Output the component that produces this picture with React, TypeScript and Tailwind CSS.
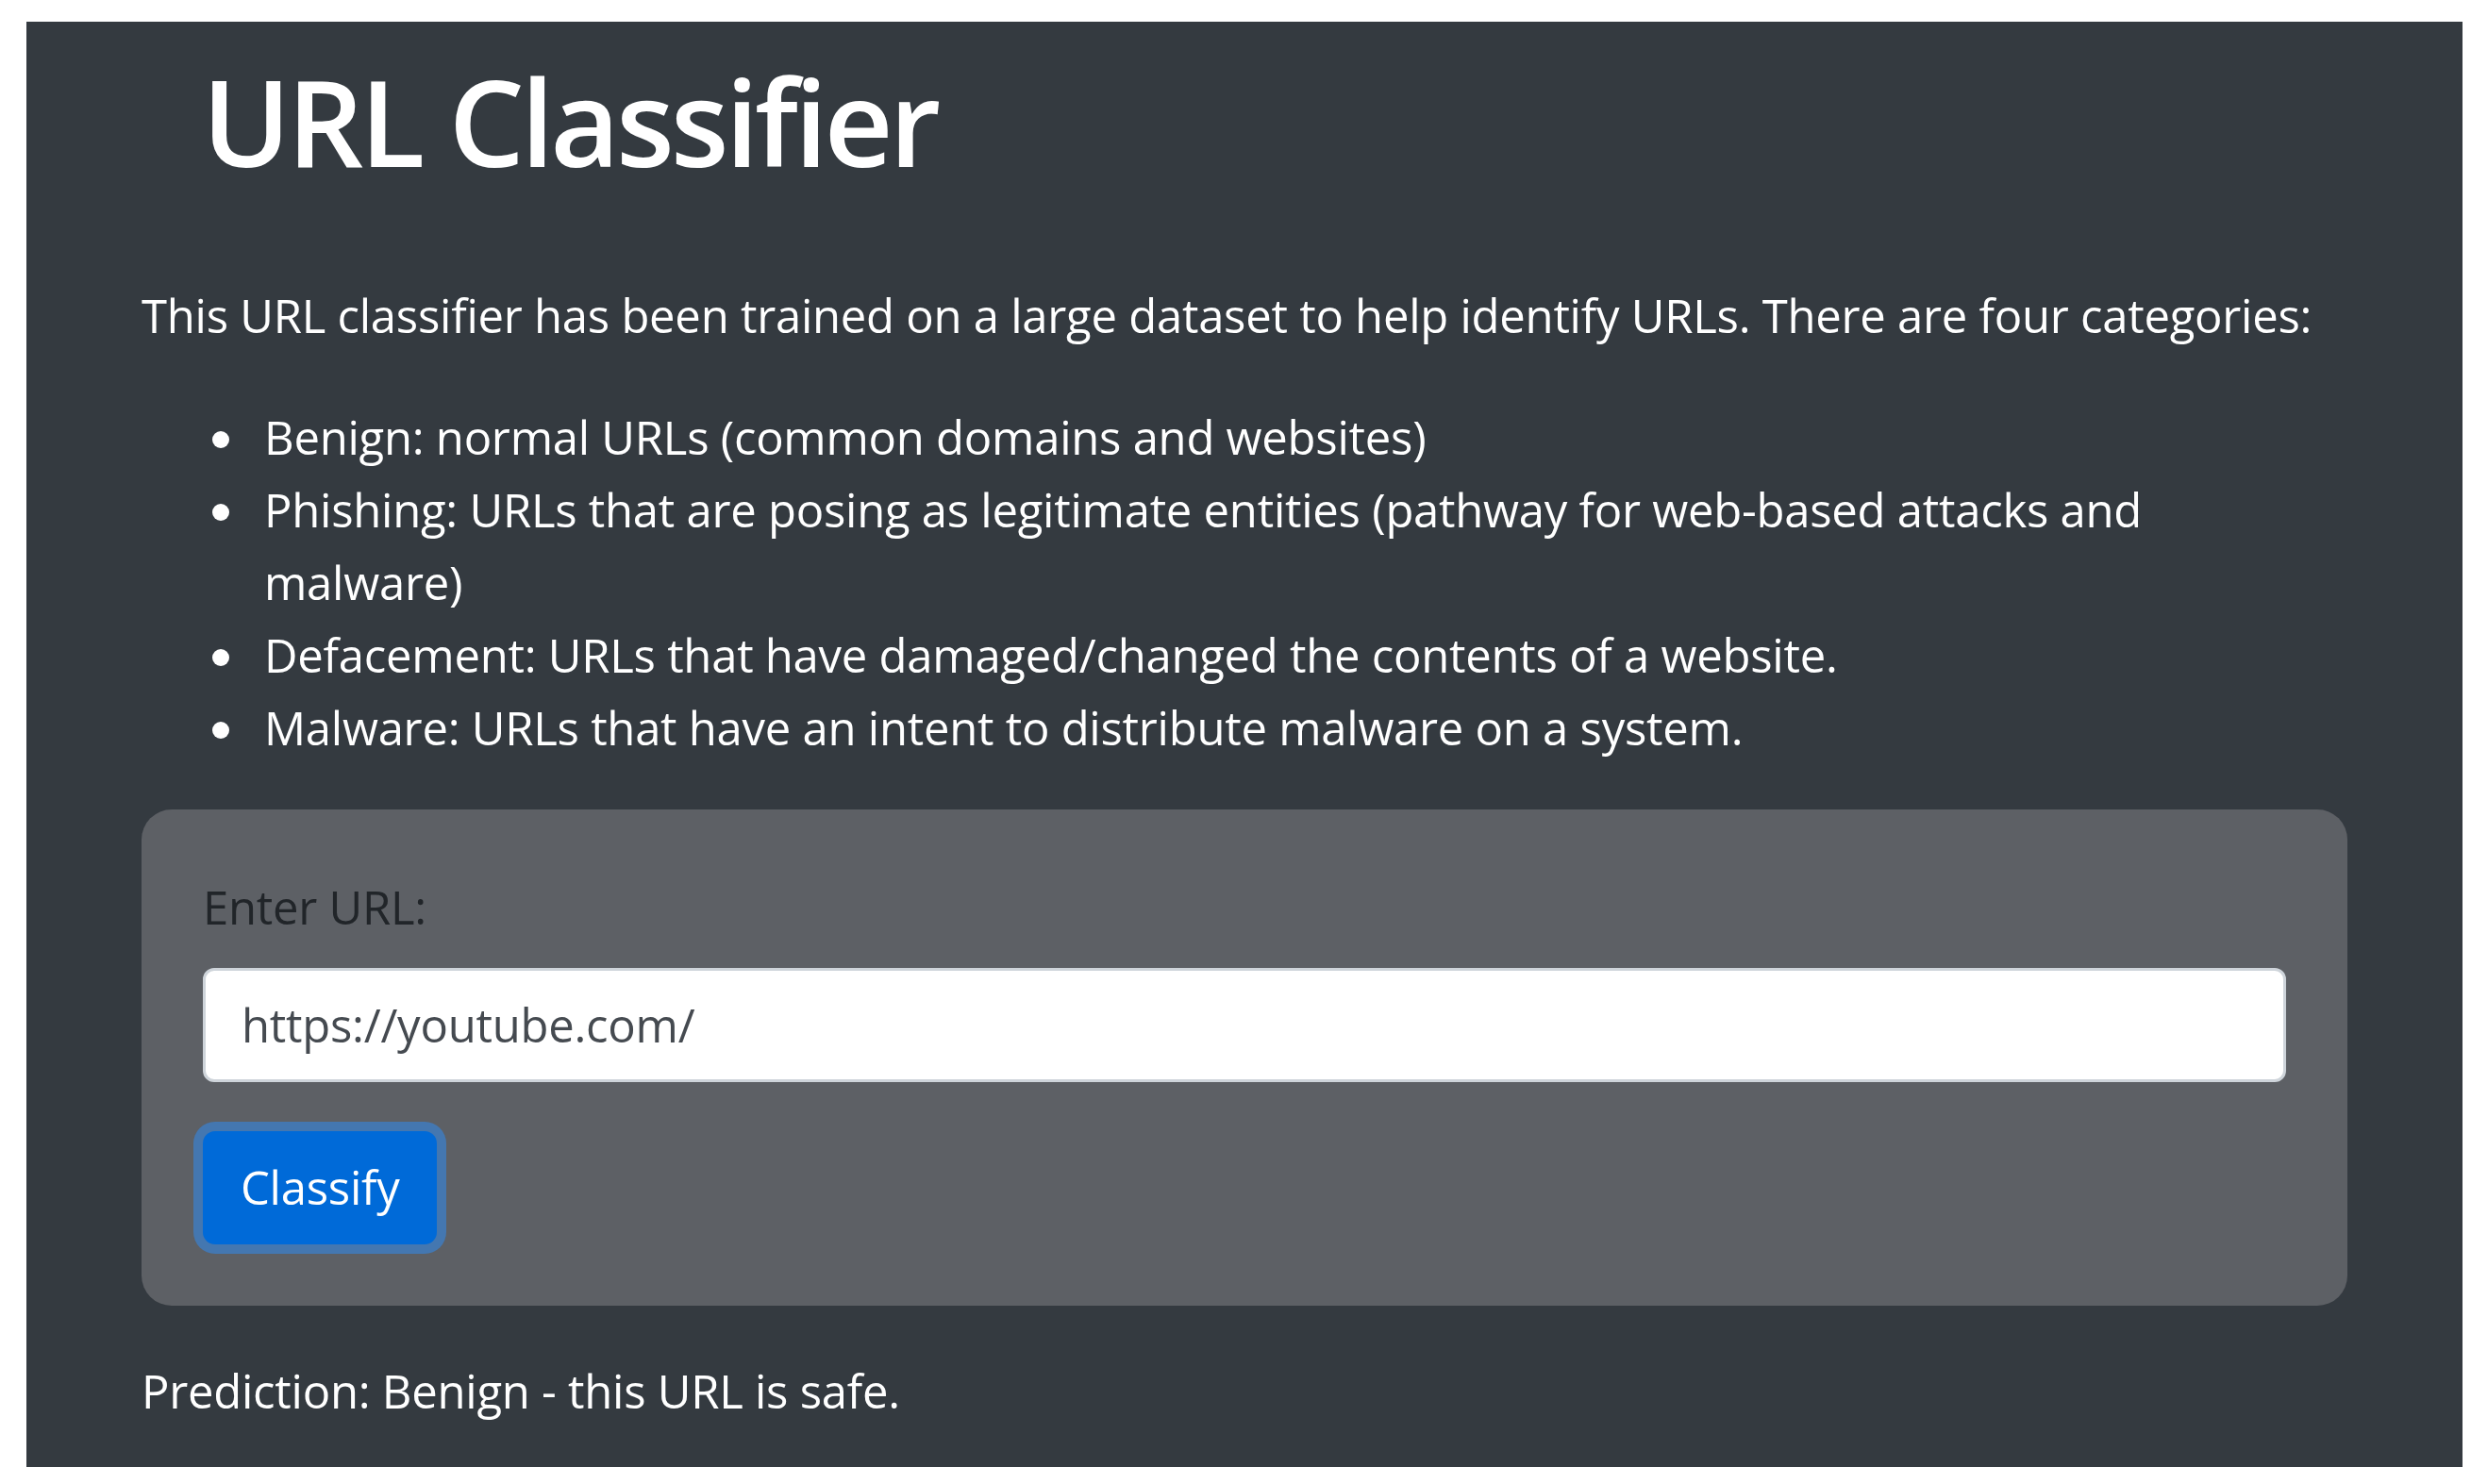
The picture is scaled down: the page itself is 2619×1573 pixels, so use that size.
import React from "react";

const items: React.ReactNode[] = [
  "Benign: normal URLs (common domains and websites)",
  <>
    Phishing: URLs that are posing as legitimate entities (pathway for web-based attacks and
    <br />
    malware)
  </>,
  "Defacement: URLs that have damaged/changed the contents of a website.",
  "Malware: URLs that have an intent to distribute malware on a system.",
];

export default function App() {
  return (
    <div
      className="min-h-screen bg-white pt-[23px] pl-[28px] pr-[9px] pb-[18px]"
      style={{ fontFamily: '"Open Sans", "Noto Sans", sans-serif' }}
    >
      <div className="h-[1532px] bg-[#343a40] px-[122px] pt-[27px] text-white">
        <h1 className="ml-[64px] text-[127px] font-semibold leading-[156px] tracking-[-4px] text-white">
          URL Classifier
        </h1>
        <p className="mt-[90px] text-[49px] leading-[77px] tracking-[-0.25px]">
          This URL classifier has been trained on a large dataset to help identify URLs. There are four categories:
        </p>
        <ul className="mt-[52px] flex flex-col">
          {items.map((it, i) => (
            <li key={i} className="flex text-[49px] leading-[77px] tracking-[-0.25px]">
              <div className="w-[130px] shrink-0 pl-[75px] pt-[32px]">
                <div className="h-[18px] w-[18px] rounded-full bg-white" />
              </div>
              <div>{it}</div>
            </li>
          ))}
        </ul>
        <div className="mt-[48px] rounded-[32px] bg-[#5d6065] p-[65px]">
          <label className="block text-[49px] leading-[77px] tracking-[-0.25px] text-[#212529]">
            Enter URL:
          </label>
          <div className="mt-[26px] flex h-[121px] items-center rounded-[12px] border-[3px] border-[#ced4da] bg-white px-[38px] text-[49px] tracking-[-0.25px] text-[#454a50]">
            https://youtube.com/
          </div>
          <button className="mt-[52px] flex h-[120px] w-[248px] items-center rounded-[13px] bg-[#006ad8] pl-[40px] text-[49px] tracking-[-0.25px] text-white shadow-[0_0_0_10px_#4477b0]">
            Classify
          </button>
        </div>
        <p className="mt-[52px] text-[49px] leading-[77px] tracking-[-0.25px]">
          Prediction: Benign - this URL is safe.
        </p>
      </div>
    </div>
  );
}
